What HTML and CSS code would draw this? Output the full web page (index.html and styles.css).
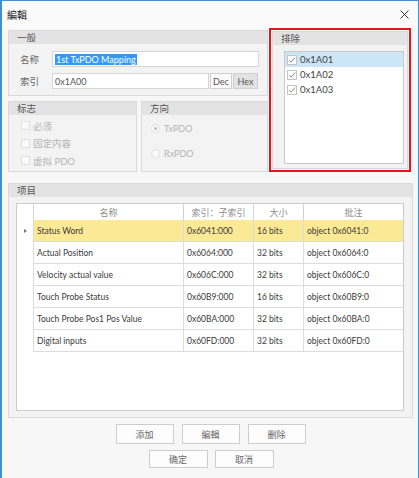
FILE: index.html
```html
<!DOCTYPE html>
<html lang="zh">
<head>
<meta charset="utf-8">
<title>編輯</title>
<link rel="stylesheet" href="styles.css">
</head>
<body>
<div class="window">
  <div class="titlebar">
    <span class="title">編輯</span>
    <svg class="close" width="9" height="9" viewBox="0 0 9 9"><path d="M0.5 0.5 L8.5 8.5 M8.5 0.5 L0.5 8.5" stroke="#333" stroke-width="1" fill="none"/></svg>
  </div>

  <div class="top">
    <div class="left-col">
      <section class="group general">
        <div class="group-head">一般</div>
        <div class="general-body">
          <div class="field-row">
            <span class="field-label">名称</span>
            <div class="input name-input"><span class="sel">1st TxPDO Mapping</span></div>
          </div>
          <div class="field-row">
            <span class="field-label">索引</span>
            <div class="input index-input">0x1A00</div>
            <span class="mini-btn">Dec</span>
            <span class="mini-btn pressed">Hex</span>
          </div>
        </div>
      </section>
      <div class="sub-row">
        <section class="group flags">
          <div class="group-head">标志</div>
          <div class="flags-body">
            <div class="check-row"><span class="cb"></span>必须</div>
            <div class="check-row"><span class="cb"></span>固定内容</div>
            <div class="check-row"><span class="cb"></span>虚拟 PDO</div>
          </div>
        </section>
        <section class="group direction">
          <div class="group-head">方向</div>
          <div class="direction-body">
            <div class="radio-row"><span class="radio on"></span>TxPDO</div>
            <div class="radio-row"><span class="radio"></span>RxPDO</div>
          </div>
        </section>
      </div>
    </div>

    <div class="highlight-frame">
      <section class="group exclude">
        <div class="group-head">排除</div>
        <div class="list">
          <div class="list-item selected"><span class="lcb"><svg width="8" height="8" viewBox="0 0 8 8"><path d="M1 4.2 L3 6.2 L7 1.5" stroke="#8a8a8a" stroke-width="1" fill="none"/></svg></span>0x1A01</div>
          <div class="list-item"><span class="lcb"><svg width="8" height="8" viewBox="0 0 8 8"><path d="M1 4.2 L3 6.2 L7 1.5" stroke="#8a8a8a" stroke-width="1" fill="none"/></svg></span>0x1A02</div>
          <div class="list-item"><span class="lcb"><svg width="8" height="8" viewBox="0 0 8 8"><path d="M1 4.2 L3 6.2 L7 1.5" stroke="#8a8a8a" stroke-width="1" fill="none"/></svg></span>0x1A03</div>
        </div>
      </section>
    </div>
  </div>

  <section class="group items">
    <div class="group-head">项目</div>
    <div class="table">
      <div class="trow thead">
        <div class="rh"></div>
        <div class="c c-name">名称</div>
        <div class="c c-idx">索引：子索引</div>
        <div class="c c-size">大小</div>
        <div class="c c-note">批注</div>
      </div>
      <div class="trow current">
        <div class="rh"><span class="tri"></span></div>
        <div class="c c-name">Status Word</div>
        <div class="c c-idx">0x6041:000</div>
        <div class="c c-size">16 bits</div>
        <div class="c c-note">object 0x6041:0</div>
      </div>
      <div class="trow">
        <div class="rh"></div>
        <div class="c c-name">Actual Position</div>
        <div class="c c-idx">0x6064:000</div>
        <div class="c c-size">32 bits</div>
        <div class="c c-note">object 0x6064:0</div>
      </div>
      <div class="trow">
        <div class="rh"></div>
        <div class="c c-name">Velocity actual value</div>
        <div class="c c-idx">0x606C:000</div>
        <div class="c c-size">32 bits</div>
        <div class="c c-note">object 0x606C:0</div>
      </div>
      <div class="trow">
        <div class="rh"></div>
        <div class="c c-name">Touch Probe Status</div>
        <div class="c c-idx">0x60B9:000</div>
        <div class="c c-size">16 bits</div>
        <div class="c c-note">object 0x60B9:0</div>
      </div>
      <div class="trow">
        <div class="rh"></div>
        <div class="c c-name">Touch Probe Pos1 Pos Value</div>
        <div class="c c-idx">0x60BA:000</div>
        <div class="c c-size">32 bits</div>
        <div class="c c-note">object 0x60BA:0</div>
      </div>
      <div class="trow">
        <div class="rh"></div>
        <div class="c c-name">Digital inputs</div>
        <div class="c c-idx">0x60FD:000</div>
        <div class="c c-size">32 bits</div>
        <div class="c c-note">object 0x60FD:0</div>
      </div>
    </div>
  </section>

  <div class="buttons">
    <div class="btn-row">
      <span class="btn">添加</span>
      <span class="btn">編輯</span>
      <span class="btn">删除</span>
    </div>
    <div class="btn-row second">
      <span class="btn">确定</span>
      <span class="btn">取消</span>
    </div>
  </div>
</div>
</body>
</html>
```

FILE: styles.css
```css
* { box-sizing: border-box; }

html, body {
  margin: 0;
  padding: 0;
  background: #f7f7f7;
}

body {
  font-family: Lato, "Noto Sans CJK SC", sans-serif;
  font-size: 9px;
  color: #444;
}

.window {
  width: 419px;
  height: 478px;
  background: #f7f7f7;
  border-top: 1px solid #3d8fdc;
  border-left: 2px solid #3d8fdc;
  border-right: 1px solid #3d8fdc;
  overflow: hidden;
}

.titlebar {
  height: 27px;
  display: flex;
  align-items: center;
  justify-content: space-between;
  padding: 0 9px 0 5px;
  background: #fafafa;
}

.title {
  font-size: 10px;
  color: #222;
}

.top {
  display: flex;
  padding-left: 6px;
  gap: 1px;
}

.left-col {
  width: 260px;
  padding-top: 2px;
  display: flex;
  flex-direction: column;
  gap: 5px;
}

.group {
  border: 1px solid #dadada;
  background: #f3f3f3;
}

.group-head {
  height: 13px;
  line-height: 13px;
  background: #e3e3e3;
  padding-left: 8px;
  font-size: 9.5px;
  color: #555;
}

.general { height: 66px; }

.general-body {
  padding: 7px 8px 6px 11px;
  display: flex;
  flex-direction: column;
  gap: 6px;
}

.field-row {
  display: flex;
  align-items: center;
  height: 16px;
}

.field-label {
  width: 32px;
  color: #666;
  font-size: 9.5px;
}

.input {
  height: 16px;
  background: #fff;
  border: 1px solid #d6d6d6;
  display: flex;
  align-items: center;
  padding-left: 2px;
  color: #555;
  font-size: 9px;
}

.name-input { width: 207px; }

.sel {
  background: #3399ff;
  color: #fff;
  padding: 0 1px;
  line-height: 11px;
}

.index-input { width: 157px; margin-right: 1px; }

.mini-btn {
  height: 16px;
  border: 1px solid #d0d0d0;
  background: #fbfbfb;
  display: flex;
  align-items: center;
  justify-content: center;
  width: 22px;
  color: #555;
  font-size: 9px;
}

.mini-btn.pressed {
  width: 25px;
  margin-left: 1px;
  background: #e2e2e2;
}

.sub-row {
  display: flex;
  gap: 4px;
}

.flags { width: 129px; height: 71px; }
.direction { width: 127px; height: 71px; }

.flags-body {
  padding: 2px 0 0 12px;
  display: flex;
  flex-direction: column;
}

.check-row {
  height: 17.5px;
  display: flex;
  align-items: center;
  gap: 3px;
  color: #b3b3b3;
  font-size: 9.5px;
}

.cb {
  width: 9px;
  height: 9px;
  border: 1px solid #e0e0e0;
  background: #fafafa;
}

.direction-body {
  padding: 9px 0 0 9px;
  display: flex;
  flex-direction: column;
  gap: 16px;
}

.radio-row {
  display: flex;
  align-items: center;
  gap: 4px;
  color: #b3b3b3;
  height: 9px;
}

.radio {
  width: 9px;
  height: 9px;
  border-radius: 50%;
  border: 1px solid #e0e0e0;
  background: #fafafa;
  display: flex;
  align-items: center;
  justify-content: center;
}

.radio.on::after {
  content: "";
  width: 3px;
  height: 3px;
  border-radius: 50%;
  background: #b8b8b8;
}

.highlight-frame {
  width: 142px;
  height: 144px;
  border: 2px solid #e8141b;
  padding: 1px;
}

.exclude {
  height: 138px;
  background: #f3f3f3;
}

.list {
  margin: 6px 3px 0 11px;
  height: 113px;
  background: #fff;
  border: 1px solid #c9c9c9;
  padding-top: 0;
}

.list-item {
  height: 15px;
  display: flex;
  align-items: center;
  padding-left: 2px;
  gap: 3px;
  color: #444;
  font-size: 9.5px;
}

.list-item.selected { background: #cce6f8; }

.lcb {
  width: 10px;
  height: 10px;
  border: 1px solid #c4c4c4;
  background: #fff;
  display: flex;
  align-items: center;
  justify-content: center;
}

.items {
  margin: 11px 0 0 6px;
  width: 405px;
  height: 235px;
}

.table {
  margin: 6px 0 0 7px;
  width: 388px;
  height: 208px;
  background: #fff;
  border: 1px solid #cbcbcb;
}

.trow {
  display: flex;
  height: 22px;
}

.trow.thead { height: 16px; }

.rh {
  width: 16px;
  flex: none;
  display: flex;
  align-items: center;
  justify-content: center;
}

.c {
  flex: none;
  display: flex;
  align-items: center;
  padding-left: 3px;
  border-left: 1px solid #dcdcdc;
  border-bottom: 1px solid #dcdcdc;
  color: #3a3a3a;
  font-size: 8.5px;
  white-space: nowrap;
}

.c-name { width: 150px; }
.c-idx { width: 70px; }
.c-size { width: 50px; }
.c-note { width: 100px; }

.thead .c {
  justify-content: center;
  padding-left: 0;
  color: #8c8c8c;
  font-size: 9px;
  border-bottom: none;
  border-left-color: #d2d2d2;
}

.thead .rh { border-right: none; }

.current .c { background: #fce995; }

.tri {
  width: 0;
  height: 0;
  border-top: 2.5px solid transparent;
  border-bottom: 2.5px solid transparent;
  border-left: 3px solid #777;
}

.buttons {
  margin-top: 6px;
  display: flex;
  flex-direction: column;
  align-items: center;
  gap: 6px;
}

.btn-row {
  display: flex;
  gap: 8px;
  padding-left: 1px;
}

.btn-row.second { gap: 7px; padding-left: 2px; }

.btn {
  width: 58px;
  height: 20px;
  border: 1px solid #cdcdcd;
  background: #fdfdfd;
  display: flex;
  align-items: center;
  justify-content: center;
  color: #666;
  font-size: 9px;
}

.btn-row.second .btn { width: 59px; height: 18px; }
```
